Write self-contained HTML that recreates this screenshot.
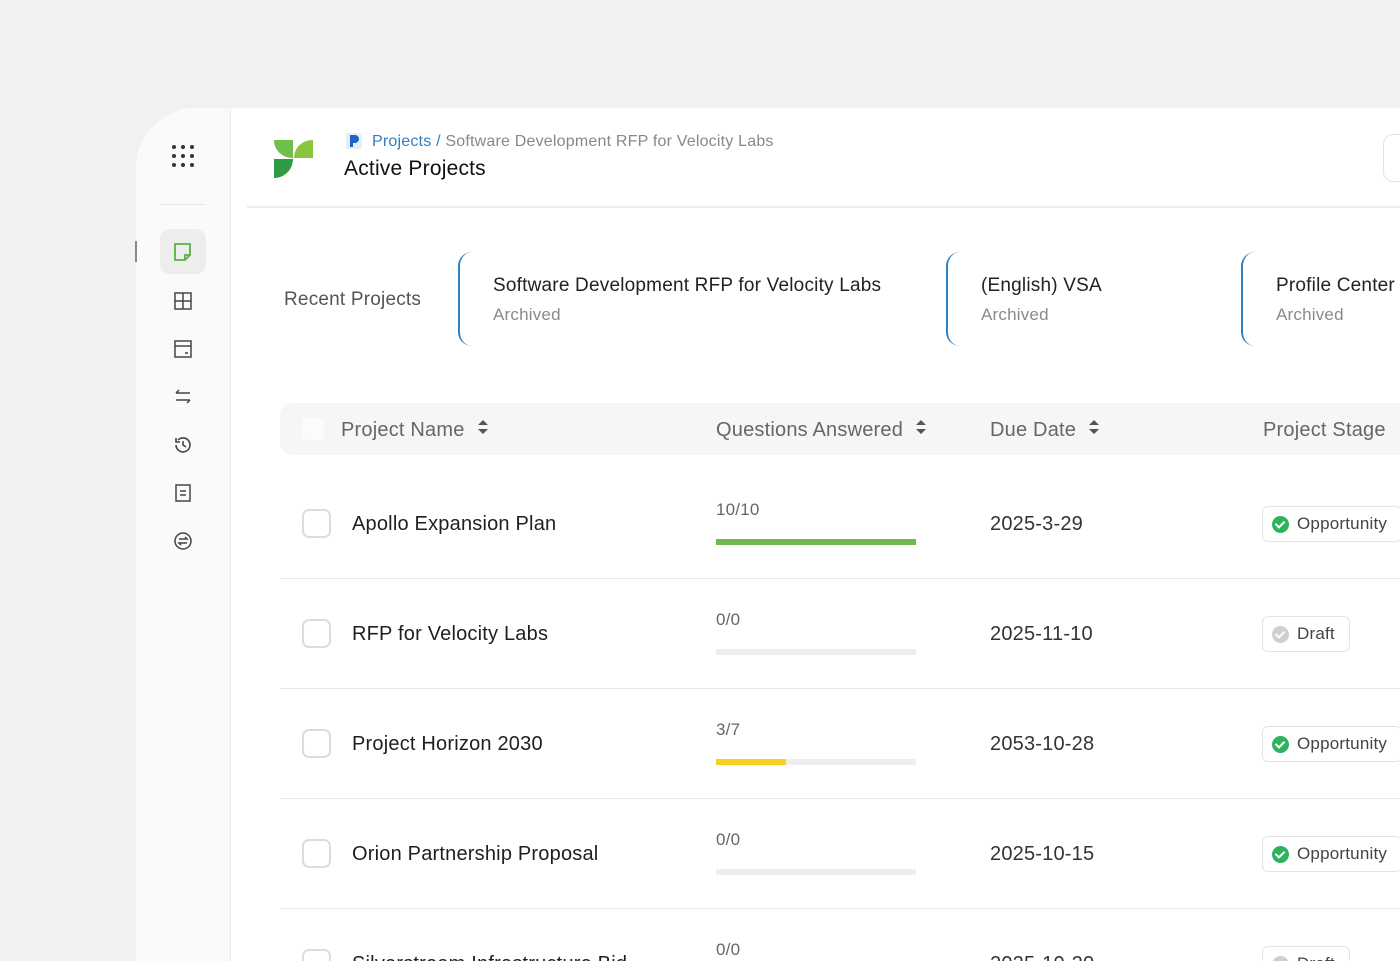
<!DOCTYPE html>
<html style="width:1400px;height:961px;overflow:hidden"><head><meta charset="utf-8"><style>
*{margin:0;padding:0;box-sizing:border-box}
body{width:1400px;height:961px;background:#f1f1f1;font-family:"Liberation Sans",sans-serif;position:relative;overflow:hidden;color:#1f1f1f;letter-spacing:0.2px}
#wrap{position:absolute;left:0;top:0;width:1400px;height:961px;overflow:hidden}
.card{position:absolute;left:136px;top:108px;width:1264px;height:853px;background:#fff;border-top-left-radius:60px}
.side{position:absolute;left:136px;top:108px;width:95px;height:853px;background:#fafafa;border-right:1px solid #ececec;border-top-left-radius:60px}
.abs{position:absolute}
.ico{position:absolute;left:172px;width:22px;height:22px}
.rc{position:absolute;top:252px;height:94px;background:#fff;border-left:2px solid #2f7fc1;border-radius:14px 0 0 14px}
.rc .t{position:absolute;left:33px;top:23px;font-size:19px;color:#222;white-space:nowrap}
.rc .s{position:absolute;left:33px;top:53px;font-size:17px;color:#8a8a8a}
.th{position:absolute;top:403px;left:280px;width:1140px;height:52px;background:#f5f6f6;border-radius:12px}
.hd{position:absolute;top:419px;font-size:20px;color:#666;white-space:nowrap}
.sort{display:inline-block;margin-left:12px;vertical-align:1px}
.row{position:absolute;left:280px;width:1140px;height:1px;background:#e8e8e8}
.cb{position:absolute;left:302px;width:29px;height:29px;border:2px solid #dcdcdc;border-radius:7px;background:#fff}
.nm{position:absolute;left:352px;font-size:20px;color:#1f1f1f;white-space:nowrap}
.qa{position:absolute;left:716px;font-size:17px;color:#666}
.bar{position:absolute;left:716px;width:200px;height:6px;background:#eeeeee}
.dt{position:absolute;left:990px;font-size:20px;color:#333}
.bd{position:absolute;left:1262px;height:36px;border:1px solid #e3e3e3;border-radius:6px;background:#fff;padding:0 14px 0 34px;font-size:17px;line-height:34px;color:#444;white-space:nowrap}
.bd i{position:absolute;left:9px;top:9px;width:17px;height:17px;border-radius:50%}
.bd i:after{content:"";position:absolute;left:5px;top:3px;width:4px;height:7px;border:solid #fff;border-width:0 2px 2px 0;transform:rotate(45deg)}
</style></head><body><div id="wrap">
<div class="card"></div>
<div class="side"></div>
<div class="abs" style="left:135px;top:241px;width:2px;height:21px;background:#888"></div>
<svg class="abs" style="left:171px;top:144px" width="24" height="24"><g fill="#333"><circle cx="3" cy="3" r="2"/><circle cx="12" cy="3" r="2"/><circle cx="21" cy="3" r="2"/><circle cx="3" cy="12" r="2"/><circle cx="12" cy="12" r="2"/><circle cx="21" cy="12" r="2"/><circle cx="3" cy="21" r="2"/><circle cx="12" cy="21" r="2"/><circle cx="21" cy="21" r="2"/></g></svg>
<div class="abs" style="left:160px;top:204px;width:46px;height:1px;background:#e5e5e5"></div>
<div class="abs" style="left:160px;top:229px;width:46px;height:45px;background:#ededed;border-radius:10px"></div>
<svg class="ico" style="top:241px" viewBox="0 0 22 22" fill="none" stroke="#5ab040" stroke-width="1.8"><path d="M3 3h15v11l-5 5H3z"/><path d="M18 14h-5v5"/></svg>
<svg class="ico" style="top:290px" viewBox="0 0 22 22" fill="none" stroke="#444" stroke-width="1.5"><rect x="3" y="3" width="16" height="16"/><path d="M11 3v16M3 11h16"/></svg>
<svg class="ico" style="top:338px" viewBox="0 0 22 22" fill="none" stroke="#444" stroke-width="1.5"><rect x="3" y="3" width="16" height="16"/><path d="M3 8h16M13 15h3"/></svg>
<svg class="ico" style="top:386px" viewBox="0 0 22 22" fill="none" stroke="#444" stroke-width="1.5"><path d="M4 7h14M4 7l3-3M18 14H4M18 14l-3 3"/></svg>
<svg class="ico" style="top:434px" viewBox="0 0 22 22" fill="none" stroke="#444" stroke-width="1.6"><path d="M4 11a7 7 0 1 0 2-5"/><path d="M4 4v4h4M11 7v4l3 2"/></svg>
<svg class="ico" style="top:482px" viewBox="0 0 22 22" fill="none" stroke="#444" stroke-width="1.5"><rect x="4" y="3" width="14" height="16"/><path d="M8 9h6M8 13h6"/></svg>
<svg class="ico" style="top:530px" viewBox="0 0 22 22" fill="none" stroke="#444" stroke-width="1.5"><circle cx="11" cy="11" r="8"/><path d="M7 9h8l-2-2M15 13H7l2 2"/></svg>
<svg class="abs" style="left:273px;top:138px" width="42" height="42" viewBox="0 0 42 42"><path d="M1 2h19v18C9 20 1 12 1 2z" fill="#6fbf4a"/><path d="M40 2v18H21C21 10 29 2 40 2z" fill="#8bc43f"/><path d="M1 21h19C20 31 12 40 1 40z" fill="#2f9b45"/></svg>
<svg class="abs" style="left:346px;top:133px" width="16" height="16"><rect width="16" height="16" rx="2" fill="#e6eef8"/><path d="M4 2h5a4 4 0 0 1 0 8H7v4H4z" fill="#1f63c6"/></svg>
<div class="abs" style="left:372px;top:133px;font-size:16px;color:#888;white-space:nowrap"><span style="color:#2f7fc1">Projects</span> <span style="color:#2f7fc1">/</span> Software Development RFP for Velocity Labs</div>
<div class="abs" style="left:344px;top:157px;font-size:21px;color:#111">Active Projects</div>
<div class="abs" style="left:1383px;top:134px;width:40px;height:48px;border:1px solid #e3e3e3;border-radius:10px"></div>
<div class="abs" style="left:247px;top:206px;width:1160px;height:2px;background:#eeeeee"></div>
<div class="abs" style="left:284px;top:289px;font-size:19px;color:#555">Recent Projects</div>
<div class="rc" style="left:458px;width:460px"><div class="t">Software Development RFP for Velocity Labs</div><div class="s">Archived</div></div>
<div class="rc" style="left:946px;width:270px"><div class="t">(English) VSA</div><div class="s">Archived</div></div>
<div class="rc" style="left:1241px;width:200px"><div class="t">Profile Center</div><div class="s">Archived</div></div>
<div class="th"></div>
<div class="abs" style="left:302px;top:418px;width:22px;height:22px;background:#fbfbfb;border-radius:4px"></div>
<svg width="0" height="0" style="position:absolute"><defs><g id="s"><path d="M1 6l5-5 5 5z M1 10l5 5 5-5z" fill="#555"/></g></defs></svg>
<div class="hd" style="left:341px">Project Name<svg class="sort" width="12" height="16"><use href="#s"/></svg></div>
<div class="hd" style="left:716px">Questions Answered<svg class="sort" width="12" height="16"><use href="#s"/></svg></div>
<div class="hd" style="left:990px">Due Date<svg class="sort" width="12" height="16"><use href="#s"/></svg></div>
<div class="hd" style="left:1263px">Project Stage</div>

<div class="cb" style="top:509px"></div><div class="nm" style="top:513px">Apollo Expansion Plan</div>
<div class="qa" style="top:500px">10/10</div><div class="bar" style="top:539px;background:#72b84f"></div>
<div class="dt" style="top:513px">2025-3-29</div>
<div class="bd" style="top:506px"><i style="background:#2fb35a"></i>Opportunity</div>
<div class="row" style="top:578px"></div>

<div class="cb" style="top:619px"></div><div class="nm" style="top:623px">RFP for Velocity Labs</div>
<div class="qa" style="top:610px">0/0</div><div class="bar" style="top:649px"></div>
<div class="dt" style="top:623px">2025-11-10</div>
<div class="bd" style="top:616px"><i style="background:#cfcfcf"></i>Draft</div>
<div class="row" style="top:688px"></div>

<div class="cb" style="top:729px"></div><div class="nm" style="top:733px">Project Horizon 2030</div>
<div class="qa" style="top:720px">3/7</div><div class="bar" style="top:759px"></div><div class="bar" style="top:759px;width:70px;background:#f5d21e"></div>
<div class="dt" style="top:733px">2053-10-28</div>
<div class="bd" style="top:726px"><i style="background:#2fb35a"></i>Opportunity</div>
<div class="row" style="top:798px"></div>

<div class="cb" style="top:839px"></div><div class="nm" style="top:843px">Orion Partnership Proposal</div>
<div class="qa" style="top:830px">0/0</div><div class="bar" style="top:869px"></div>
<div class="dt" style="top:843px">2025-10-15</div>
<div class="bd" style="top:836px"><i style="background:#2fb35a"></i>Opportunity</div>
<div class="row" style="top:908px"></div>

<div class="cb" style="top:949px"></div><div class="nm" style="top:953px">Silverstream Infrastructure Bid</div>
<div class="qa" style="top:940px">0/0</div>
<div class="dt" style="top:953px">2025-10-20</div>
<div class="bd" style="top:946px"><i style="background:#cfcfcf"></i>Draft</div>
</div></body></html>
